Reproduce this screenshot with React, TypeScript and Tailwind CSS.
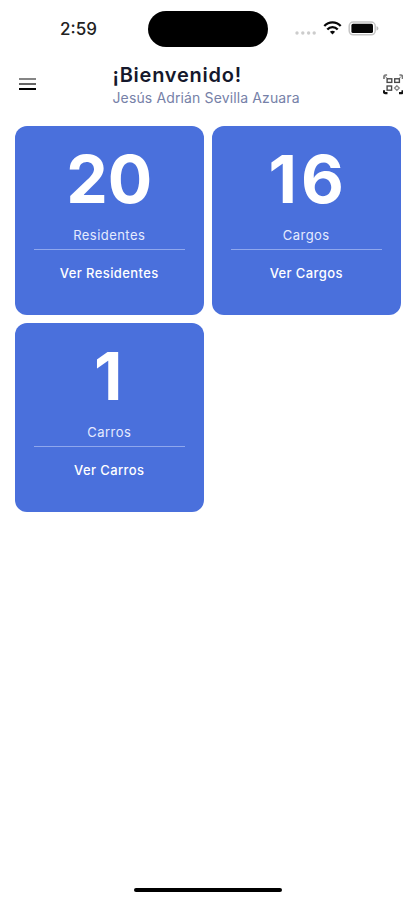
const cards = [
  { count: '20', label: 'Residentes', action: 'Ver Residentes', countStyle: 'tracking-[0px]' },
  { count: '16', label: 'Cargos', action: 'Ver Cargos', countStyle: 'pl-[4px] tracking-[4px]' },
  { count: '1', label: 'Carros', action: 'Ver Carros', countStyle: 'pr-[2px]' },
];

function StatusBar() {
  return (
    <div className="flex h-[58px] items-start">
      <div className="w-[148px] pt-[18px] pl-[60px] text-[17px] leading-[22px] font-medium tracking-[0px] text-[#222222]">2:59</div>
      <div className="mt-[11px] h-[35.5px] w-[120px] rounded-full bg-black" />
      <svg className="mt-[17px] ml-[25px]" width="86" height="24" viewBox="0 0 86 24" fill="none">
        <g fill="#cccccc">
          <circle cx="4" cy="16" r="1.7" />
          <circle cx="9.8" cy="16" r="1.7" />
          <circle cx="15.6" cy="16" r="1.7" />
          <circle cx="21.2" cy="16" r="1.7" />
        </g>
        <g stroke="#080808" strokeWidth="2.3">
          <path d="M31.3 9C36 4.1 43 4.1 47.7 9" />
          <path d="M34.3 12.5C37.2 9.3 41.8 9.3 44.7 12.5" />
        </g>
        <path d="M36.9 14.8C38.4 13.4 40.6 13.4 42.1 14.8L39.5 17.6Z" fill="#080808" />
        <rect x="56.2" y="5" width="26" height="12.8" rx="4" stroke="#c4c4c4" strokeWidth="1.5" />
        <rect x="58.4" y="6.8" width="21.6" height="9.2" rx="1.6" fill="#050505" />
        <path d="M83.5 9.2C86 9.8 86 13 83.5 13.6Z" fill="#bdbdbd" />
      </svg>
    </div>
  );
}

function ScanIcon() {
  return (
    <svg className="mt-[16px]" width="20.5" height="20.5" viewBox="0 0 21 21" fill="none">
      <path d="M1 5V2.8Q1 1 2.8 1H4.2M16.8 1H18.2Q20 1 20 2.8V5" stroke="#777777" strokeWidth="1.7" />
      <path d="M2 2.4L5 4.8M19 2.4L16 4.8" stroke="#888888" strokeWidth="1" />
      <g stroke="#484848" strokeWidth="1.4">
        <rect x="4.2" y="4.9" width="4.8" height="3.7" />
        <rect x="12" y="4.9" width="4.8" height="3.7" />
        <rect x="4.2" y="12.3" width="4.6" height="4.3" />
      </g>
      <path d="M1 16.6V18.4Q1 19.6 2.2 19.6H4.6M16.4 19.6H18.8Q20 19.6 20 18.4V16.6" stroke="#111111" strokeWidth="2.2" />
      <path d="M14.2 12L16.7 14.4L14.2 16.8L11.8 14.4Z" stroke="#858585" strokeWidth="1.3" />
    </svg>
  );
}

function Header() {
  return (
    <header className="flex h-[68px] items-start">
      <div className="mt-[20px] ml-[18.5px] flex w-[17.5px] flex-col gap-[3px]">
        <div className="h-[2px] bg-[#858585]" />
        <div className="h-[2px] bg-[#666666]" />
        <div className="h-[2px] bg-black" />
      </div>
      <div className="ml-[76.5px] w-[270px] pt-[5px]">
        <h1 className="text-[20px] leading-[25px] font-semibold tracking-[0.75px] text-[#15182c]">¡Bienvenido!</h1>
        <p className="text-[14px] leading-[20px] tracking-[0.13px] text-[#7681a8]">Jesús Adrián Sevilla Azuara</p>
      </div>
      <ScanIcon />
    </header>
  );
}

export default function App() {
  return (
    <div className="flex h-[900px] w-[415px] flex-col overflow-hidden bg-white font-['Inter',sans-serif]">
      <StatusBar />
      <Header />
      <main className="grid grid-cols-[189.5px_189.5px] gap-x-[7.5px] gap-y-[8px] pl-[14.5px]">
        {cards.map((card) => (
          <section key={card.label} className="flex h-[189px] flex-col items-center rounded-[12px] bg-[#4a70dc] text-white">
            <div className={`mt-[13px] h-[80px] text-[66px] leading-[80px] font-bold ${card.countStyle}`}>{card.count}</div>
            <div className="mt-[6px] text-[13px] leading-[20px] tracking-[0.45px] text-[#e5ebff]">{card.label}</div>
            <div className="mt-[4px] h-px w-[151px] bg-[#8fa7ed]" />
            <div className="mt-[13px] text-[13px] leading-[20px] font-medium tracking-[0.4px]">{card.action}</div>
          </section>
        ))}
      </main>
      <div className="mt-auto mb-[8px] ml-[134px] h-[4px] w-[148px] rounded-full bg-black" />
    </div>
  );
}
